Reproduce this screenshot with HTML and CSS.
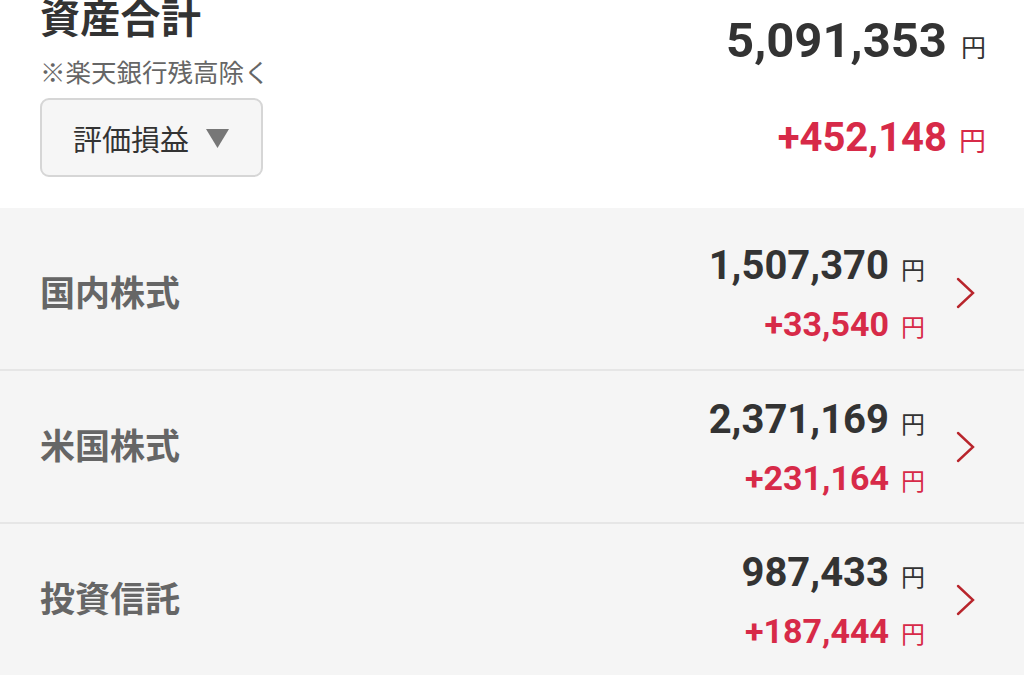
FILE: index.html
```html
<!DOCTYPE html>
<html lang="ja">
<head>
<meta charset="utf-8">
<title>資産合計</title>
<link rel="stylesheet" href="styles.css">
</head>
<body>
<div class="page">
  <section class="summary">
    <div class="summary-left">
      <h1 class="title">資産合計</h1>
      <p class="note">※楽天銀行残高除く</p>
      <button class="select" type="button">評価損益<svg class="caret" viewBox="0 0 23 19" width="23" height="19"><polygon points="0,0 23,0 11.5,19" fill="#777"/></svg></button>
    </div>
    <div class="summary-right">
      <div class="total"><span class="num">5,091,353</span><span class="yen">円</span></div>
      <div class="gain"><span class="num">+452,148</span><span class="yen">円</span></div>
    </div>
  </section>
  <ul class="list">
    <li class="row">
      <span class="label">国内株式</span>
      <div class="amounts">
        <div class="amount"><span class="num">1,507,370</span><span class="yen">円</span></div>
        <div class="diff"><span class="num">+33,540</span><span class="yen">円</span></div>
      </div>
      <svg class="chev" viewBox="0 0 20 32" width="20" height="32"><path d="M2 2 L17 16 L2 30" fill="none" stroke="#b8252c" stroke-width="2.4" stroke-linecap="round" stroke-linejoin="miter"/></svg>
    </li>
    <li class="row">
      <span class="label">米国株式</span>
      <div class="amounts">
        <div class="amount"><span class="num">2,371,169</span><span class="yen">円</span></div>
        <div class="diff"><span class="num">+231,164</span><span class="yen">円</span></div>
      </div>
      <svg class="chev" viewBox="0 0 20 32" width="20" height="32"><path d="M2 2 L17 16 L2 30" fill="none" stroke="#b8252c" stroke-width="2.4" stroke-linecap="round" stroke-linejoin="miter"/></svg>
    </li>
    <li class="row">
      <span class="label">投資信託</span>
      <div class="amounts">
        <div class="amount"><span class="num">987,433</span><span class="yen">円</span></div>
        <div class="diff"><span class="num">+187,444</span><span class="yen">円</span></div>
      </div>
      <svg class="chev" viewBox="0 0 20 32" width="20" height="32"><path d="M2 2 L17 16 L2 30" fill="none" stroke="#b8252c" stroke-width="2.4" stroke-linecap="round" stroke-linejoin="miter"/></svg>
    </li>
  </ul>
</div>
</body>
</html>
```

FILE: styles.css
```css
* { box-sizing: border-box; }
html, body {
  margin: 0;
  padding: 0;
  background: #f5f5f5;
  font-family: "Noto Sans CJK JP", "Noto Sans", sans-serif;
  color: #333;
}
.page {
  width: 1024px;
  height: 675px;
  overflow: hidden;
  background: #f5f5f5;
}
.summary {
  background: #fff;
  height: 208px;
  display: flex;
  justify-content: space-between;
  padding: 0 38px 0 40px;
}
.summary-left {
  display: flex;
  flex-direction: column;
  align-items: flex-start;
}
.title {
  margin: -10px 0 0 0;
  font-size: 40px;
  line-height: 52px;
  font-weight: 700;
  color: #333;
  letter-spacing: 0.3px;
}
.note {
  margin: 12px 0 0 0;
  font-size: 25.5px;
  line-height: 34px;
  color: #666;
}
.select {
  margin-top: 10px;
  width: 223px;
  height: 79px;
  flex-shrink: 0;
  border: 2px solid #d6d6d6;
  border-radius: 9px;
  background: #f6f6f6;
  font-family: "Noto Sans CJK JP", sans-serif;
  font-size: 29px;
  color: #333;
  display: flex;
  align-items: center;
  justify-content: flex-start;
  padding: 0 0 0 31px;
  gap: 17px;
}
.caret { display: block; margin-top: 2px; }
.summary-right {
  display: flex;
  flex-direction: column;
  align-items: flex-end;
}
.num {
  font-family: Roboto, "Liberation Sans", sans-serif;
  font-weight: 700;
}
.yen {
  font-family: "Noto Sans CJK JP", sans-serif;
  margin-left: 12px;
}
.total {
  margin-top: 11px;
  line-height: 60px;
  color: #333;
}
.total .num { font-size: 49px; }
.total .yen { font-size: 25px; margin-left: 14px; }
.gain {
  margin-top: 34px;
  line-height: 48px;
  color: #d72a48;
}
.gain .num { font-size: 40px; }
.gain .yen { font-size: 27px; margin-left: 12px; }
.list {
  list-style: none;
  margin: 0;
  padding: 9px 0 0 0;
}
.row {
  height: 153px;
  display: flex;
  align-items: center;
  padding: 0 48px 0 40px;
  border-bottom: 2px solid #e6e6e6;
}
.row:first-child { height: 154px; }
.label {
  font-size: 35px;
  font-weight: 700;
  color: #666;
  flex: 1;
  margin-bottom: 6px;
}
.amounts {
  display: flex;
  flex-direction: column;
  align-items: flex-end;
  margin-right: 31px;
  margin-top: 8px;
}
.amount {
  line-height: 50px;
  color: #333;
}
.amount .num { font-size: 40px; }
.amount .yen { font-size: 24px; margin-left: 12px; }
.diff {
  margin-top: 3px;
  line-height: 48px;
  color: #d72a48;
}
.diff .num { font-size: 34px; }
.diff .yen { font-size: 24px; margin-left: 12px; }
.chev { display: block; }
```
